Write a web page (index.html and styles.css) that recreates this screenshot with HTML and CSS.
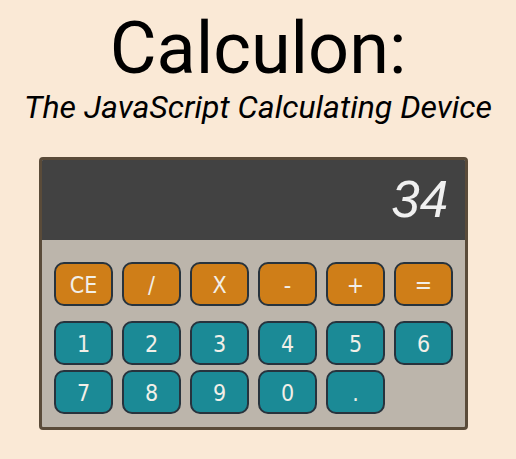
FILE: index.html
```html
<!DOCTYPE html>
<html>
<head>
<meta charset="utf-8">
<link rel="stylesheet" href="styles.css">
</head>
<body>
<header class="head">
  <h1 class="title">Calculon:</h1>
  <h2 class="subtitle">The JavaScript Calculating Device</h2>
</header>
<div class="calc">
  <div class="display">34</div>
  <div class="keypad">
    <div class="row ops">
      <button class="key op">CE</button>
      <button class="key op">/</button>
      <button class="key op">X</button>
      <button class="key op">-</button>
      <button class="key op">+</button>
      <button class="key op">=</button>
    </div>
    <div class="nums">
      <div class="row">
        <button class="key num">1</button>
        <button class="key num">2</button>
        <button class="key num">3</button>
        <button class="key num">4</button>
        <button class="key num">5</button>
        <button class="key num">6</button>
      </div>
      <div class="row">
        <button class="key num">7</button>
        <button class="key num">8</button>
        <button class="key num">9</button>
        <button class="key num">0</button>
        <button class="key num">.</button>
      </div>
    </div>
  </div>
</div>
</body>
</html>
```
FILE: styles.css
```css
html, body {
  margin: 0;
  padding: 0;
  background: #fae9d6;
}
.head {
  text-align: center;
  padding-top: 11px;
}
.title {
  margin: 0;
  font-family: Roboto, sans-serif;
  font-weight: 400;
  font-size: 72px;
  line-height: 76px;
  color: #000;
}
.subtitle {
  margin: 2px 0 0;
  font-family: Roboto, sans-serif;
  font-style: italic;
  font-weight: 400;
  font-size: 32px;
  line-height: 36px;
  color: #000;
}
.calc {
  width: 423px;
  margin: 32px 0 0 39px;
  border: 3px solid #5a4b39;
  border-radius: 4px;
  overflow: hidden;
  background: #bcb5ab;
}
.display {
  height: 80px;
  background: #424242;
  color: #f0f0f0;
  font-family: "Liberation Sans", Arial, sans-serif;
  font-style: italic;
  font-size: 51px;
  line-height: 80px;
  text-align: right;
  padding-right: 17px;
}
.keypad {
  padding: 22px 12px 13px;
  display: flex;
  flex-direction: column;
  gap: 15px;
}
.nums {
  display: flex;
  flex-direction: column;
  gap: 5px;
}
.row {
  display: flex;
  gap: 9px;
}
.key {
  width: 59px;
  height: 44px;
  box-sizing: border-box;
  border: 2px solid #27333d;
  border-radius: 10px;
  font-family: "DejaVu Sans Condensed", "DejaVu Sans", Verdana, sans-serif;
  font-size: 23px;
  line-height: 1;
  padding: 3px 0 0;
  color: #f2efe8;
  margin: 0;
}
.op {
  background: #cf7e18;
}
.num {
  background: #1b8a96;
}
```
